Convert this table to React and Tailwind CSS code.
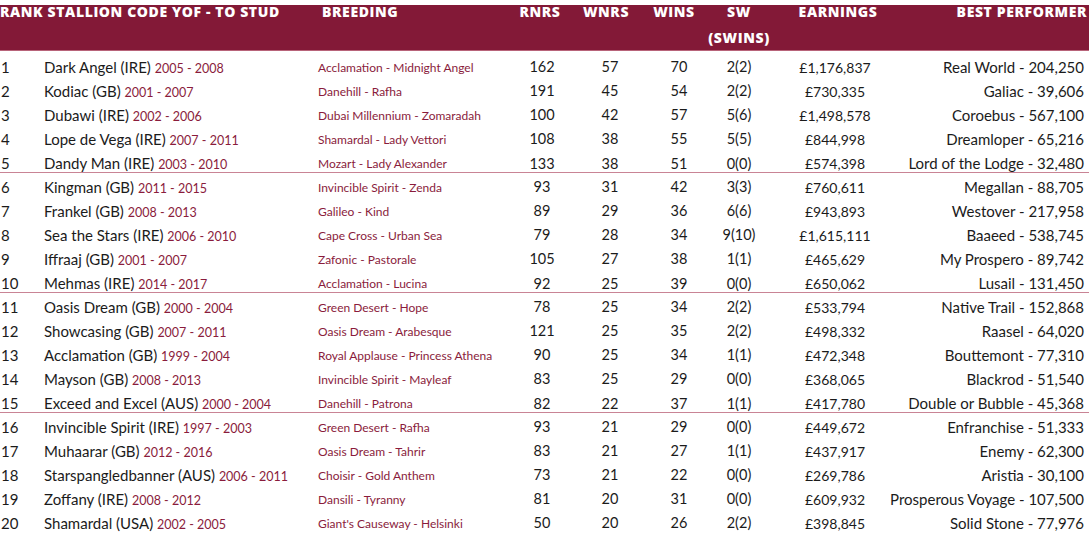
import React from "react";

const rows = [
  ["1", "Dark Angel (IRE)", "2005 - 2008", "Acclamation - Midnight Angel", "162", "57", "70", "2(2)", "£1,176,837", "Real World - 204,250"],
  ["2", "Kodiac (GB)", "2001 - 2007", "Danehill - Rafha", "191", "45", "54", "2(2)", "£730,335", "Galiac - 39,606"],
  ["3", "Dubawi (IRE)", "2002 - 2006", "Dubai Millennium - Zomaradah", "100", "42", "57", "5(6)", "£1,498,578", "Coroebus - 567,100"],
  ["4", "Lope de Vega (IRE)", "2007 - 2011", "Shamardal - Lady Vettori", "108", "38", "55", "5(5)", "£844,998", "Dreamloper - 65,216"],
  ["5", "Dandy Man (IRE)", "2003 - 2010", "Mozart - Lady Alexander", "133", "38", "51", "0(0)", "£574,398", "Lord of the Lodge - 32,480"],
  ["6", "Kingman (GB)", "2011 - 2015", "Invincible Spirit - Zenda", "93", "31", "42", "3(3)", "£760,611", "Megallan - 88,705"],
  ["7", "Frankel (GB)", "2008 - 2013", "Galileo - Kind", "89", "29", "36", "6(6)", "£943,893", "Westover - 217,958"],
  ["8", "Sea the Stars (IRE)", "2006 - 2010", "Cape Cross - Urban Sea", "79", "28", "34", "9(10)", "£1,615,111", "Baaeed - 538,745"],
  ["9", "Iffraaj (GB)", "2001 - 2007", "Zafonic - Pastorale", "105", "27", "38", "1(1)", "£465,629", "My Prospero - 89,742"],
  ["10", "Mehmas (IRE)", "2014 - 2017", "Acclamation - Lucina", "92", "25", "39", "0(0)", "£650,062", "Lusail - 131,450"],
  ["11", "Oasis Dream (GB)", "2000 - 2004", "Green Desert - Hope", "78", "25", "34", "2(2)", "£533,794", "Native Trail - 152,868"],
  ["12", "Showcasing (GB)", "2007 - 2011", "Oasis Dream - Arabesque", "121", "25", "35", "2(2)", "£498,332", "Raasel - 64,020"],
  ["13", "Acclamation (GB)", "1999 - 2004", "Royal Applause - Princess Athena", "90", "25", "34", "1(1)", "£472,348", "Bouttemont - 77,310"],
  ["14", "Mayson (GB)", "2008 - 2013", "Invincible Spirit - Mayleaf", "83", "25", "29", "0(0)", "£368,065", "Blackrod - 51,540"],
  ["15", "Exceed and Excel (AUS)", "2000 - 2004", "Danehill - Patrona", "82", "22", "37", "1(1)", "£417,780", "Double or Bubble - 45,368"],
  ["16", "Invincible Spirit (IRE)", "1997 - 2003", "Green Desert - Rafha", "93", "21", "29", "0(0)", "£449,672", "Enfranchise - 51,333"],
  ["17", "Muhaarar (GB)", "2012 - 2016", "Oasis Dream - Tahrir", "83", "21", "27", "1(1)", "£437,917", "Enemy - 62,300"],
  ["18", "Starspangledbanner (AUS)", "2006 - 2011", "Choisir - Gold Anthem", "73", "21", "22", "0(0)", "£269,786", "Aristia - 30,100"],
  ["19", "Zoffany (IRE)", "2008 - 2012", "Dansili - Tyranny", "81", "20", "31", "0(0)", "£609,932", "Prosperous Voyage - 107,500"],
  ["20", "Shamardal (USA)", "2002 - 2005", "Giant's Causeway - Helsinki", "50", "20", "26", "2(2)", "£398,845", "Solid Stone - 77,976"],
];

const grid =
  "grid grid-cols-[44px_274px_190px_68px_68px_70px_50px_142px_minmax(0,1fr)]";

function Row({ r, last }) {
  const [rank, name, years, breeding, rnrs, wnrs, wins, sw, earn, best] = r;
  // every 5th row gets the pink rule underneath
  const sizing = last
    ? "h-[22px] pt-[1px] mb-[2px] border-b border-[#c98495]"
    : "h-[24px]";
  return (
    <div className={`${grid} ${sizing} items-center text-[15px] text-[#1b1b1b] whitespace-nowrap`}>
      <div className="pl-[1px]">{rank}</div>
      <div>
        {name} <span className="text-[12.5px] text-[#8a1c3c]">{years}</span>
      </div>
      <div className="text-[12px] text-[#8a1c3c] pt-[2px]">{breeding}</div>
      <div className="text-center text-[14.5px]">{rnrs}</div>
      <div className="text-center text-[14.5px]">{wnrs}</div>
      <div className="text-center text-[14.5px]">{wins}</div>
      <div className="text-center text-[14.5px]">{sw}</div>
      <div className="text-center text-[14px]">{earn}</div>
      <div className="flex justify-end pr-[5px]">{best}</div>
    </div>
  );
}

export default function App() {
  return (
    <div
      className="w-[1089px] h-[552px] bg-white overflow-hidden"
      style={{ fontFamily: "Lato, 'Open Sans', sans-serif" }}
    >
      <div
        className={`${grid} mt-[5px] h-[46px] bg-[#831937] border-b border-[#b8647a] text-white text-[14px] leading-[13px] font-extrabold tracking-[0.6px] items-start whitespace-nowrap`}
        style={{ fontFamily: "'Open Sans', Lato, sans-serif" }}
      >
        <div className="col-span-2">RANK STALLION CODE YOF - TO STUD</div>
        <div className="pl-[4px]">BREEDING</div>
        <div className="text-center pr-[4px]">RNRS</div>
        <div className="text-center pr-[8px]">WNRS</div>
        <div className="text-center pr-[10px]">WINS</div>
        <div className="flex flex-col items-center gap-[13px]">
          <span>SW</span>
          <span>(SWINS)</span>
        </div>
        <div className="text-center pl-[6px]">EARNINGS</div>
        <div className="flex justify-end pr-[2px]">BEST PERFORMER</div>
      </div>
      <div className="mt-[4px]">
        {rows.map((r, i) => (
          <Row key={r[0]} r={r} last={i === 4 || i === 9 || i === 14} />
        ))}
      </div>
    </div>
  );
}
